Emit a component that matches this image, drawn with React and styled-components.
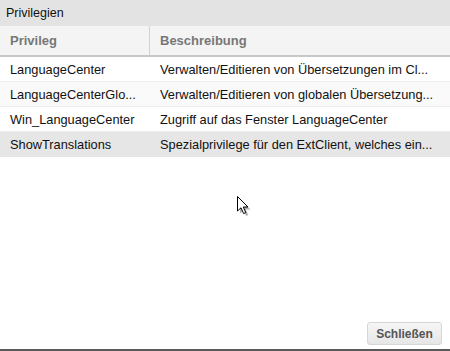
import React from 'react'
import styled, { createGlobalStyle } from 'styled-components'

const GlobalStyle = createGlobalStyle`
    html, body {
        margin: 0;
        padding: 0;
        background: #fff;
    }
    #root {
        height: 351px;
    }
`

const Window = styled.div`
    position: relative;
    height: 351px;
    display: flex;
    flex-direction: column;
    font-family: "Liberation Sans", Arial, sans-serif;
    background: #fff;
    border-bottom: 2px solid #5a5a5a;
    box-sizing: border-box;
    overflow: hidden;
`

const TitleBar = styled.div`
    height: 26px;
    flex: none;
    display: flex;
    align-items: center;
    padding-left: 6px;
    background: #e3e3e3;
    font-size: 12.5px;
    color: #111;
`

const Grid = styled.div`
    display: flex;
    flex-direction: column;
`

const HeaderRow = styled.div`
    display: grid;
    grid-template-columns: 150px 1fr;
    height: 29px;
    background: #f4f4f4;
    border-bottom: 2px solid #c8c8c8;
`

const HeaderCell = styled.div`
    display: flex;
    align-items: center;
    padding-left: 10px;
    font-size: 13px;
    font-weight: bold;
    color: #777;
    border-right: ${props => props.divider ? "1px solid #d2d2d2" : "none"};
`

const Row = styled.div`
    display: grid;
    grid-template-columns: 150px 1fr;
    height: 24px;
    border-bottom: 1px solid ${props => props.hover ? "#e6e6e6" : "#ededed"};
    background: ${props => props.hover ? "#e6e6e6" : props.alt ? "#fafafa" : "#fff"};
`

const Cell = styled.div`
    display: flex;
    align-items: center;
    padding: 0 6px 0 10px;
    font-size: 12.8px;
    color: #111;
    min-width: 0;
    white-space: nowrap;
`

const Spacer = styled.div`
    flex: 1;
`

const Footer = styled.div`
    display: flex;
    justify-content: flex-end;
    padding: 0 8px 4px 0;
`

const Button = styled.button`
    height: 23px;
    width: 75px;
    padding: 0;
    border: 1px solid #d6d6d6;
    border-radius: 3px;
    background: linear-gradient(#f6f6f6, #e6e6e6);
    font-family: "Liberation Sans", Arial, sans-serif;
    font-size: 12px;
    font-weight: bold;
    color: #555;
`

const Cursor = styled.svg`
    position: absolute;
    left: 236px;
    top: 195px;
`

const rows = [
    { name: "LanguageCenter", desc: "Verwalten/Editieren von Übersetzungen im Cl..." },
    { name: "LanguageCenterGlo...", desc: "Verwalten/Editieren von globalen Übersetzung..." },
    { name: "Win_LanguageCenter", desc: "Zugriff auf das Fenster LanguageCenter" },
    { name: "ShowTranslations", desc: "Spezialprivilege für den ExtClient, welches ein..." },
]

export default function App() {
    return (
        <Window>
            <GlobalStyle />
            <TitleBar>Privilegien</TitleBar>
            <Grid>
                <HeaderRow>
                    <HeaderCell divider>Privileg</HeaderCell>
                    <HeaderCell>Beschreibung</HeaderCell>
                </HeaderRow>
                {rows.map((row, index) => (
                    <Row key={row.name} alt={index === 1} hover={index === 3}>
                        <Cell>{row.name}</Cell>
                        <Cell>{row.desc}</Cell>
                    </Row>
                ))}
            </Grid>
            <Spacer />
            <Footer>
                <Button>Schließen</Button>
            </Footer>
            <Cursor width="16" height="22" viewBox="0 0 16 22">
                <path d="M2.5 2.5 L2.5 17 L6 13.8 L8.6 19.6 L10.8 18.6 L8.3 13 L13 13 Z" fill="#222" opacity="0.35" transform="translate(1.5 1.5)" />
                <path d="M1.5 1.5 L1.5 16 L5 12.8 L7.6 18.6 L9.8 17.6 L7.3 12 L12 12 Z" fill="#fff" stroke="#000" strokeWidth="1" strokeLinejoin="miter" />
            </Cursor>
        </Window>
    )
}
